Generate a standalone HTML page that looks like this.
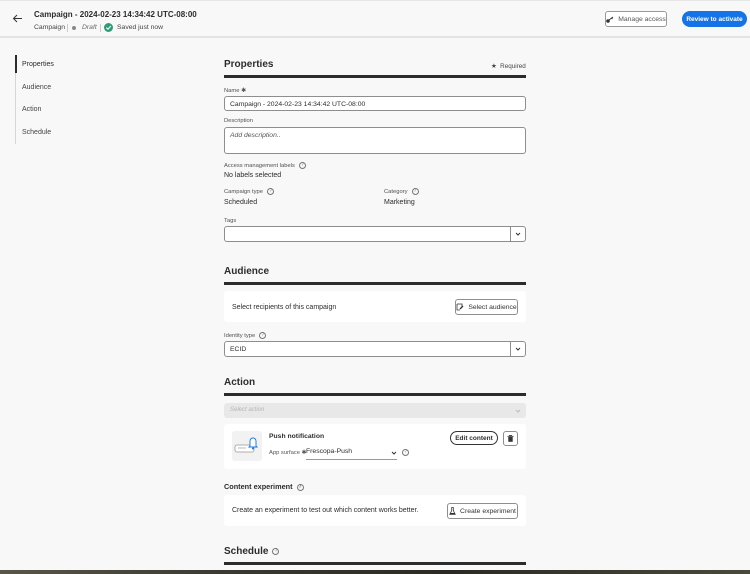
<!DOCTYPE html>
<html><head><meta charset="utf-8"><style>
*{box-sizing:border-box;margin:0;padding:0}
body{width:750px;height:574px;overflow:hidden;background:#f8f8f8;font-family:"Liberation Sans",sans-serif;color:#2c2c2c;position:relative;font-size:7px}
.a{position:absolute;white-space:nowrap}
.hdr{position:absolute;left:0;top:0;width:750px;height:38px;background:#f8f8f8;border-top:1px solid #e6e6e6;border-bottom:2px solid #e3e3e3}
.h2{font-weight:bold;font-size:10px;color:#2c2c2c}
.rule{position:absolute;left:224px;width:302px;height:3px;background:#2c2c2c}
.lbl{font-size:5.8px;color:#505050}
.inp{position:absolute;left:224px;width:302px;background:#fff;border:1px solid #8e8e8e;border-radius:3px}
.card{position:absolute;left:224px;width:302px;background:#fff;border-radius:3px}
.btn{position:absolute;border:1px solid #8e8e8e;border-radius:3px;background:#fff;font-size:6.8px;display:flex;align-items:center;justify-content:center;gap:4px;color:#333}
.q{display:inline-block;width:7px;height:7px;border:0.8px solid #777;border-radius:50%;font-size:5px;line-height:5.5px;text-align:center;vertical-align:middle;margin-left:4px;color:#777}
.dd{position:absolute;right:0;top:0;bottom:0;width:15px;border-left:1px solid #8e8e8e;display:flex;align-items:center;justify-content:center}
</style></head><body>
<div class="hdr"></div>
<svg class="a" style="left:12px;top:14px" width="11" height="9" viewBox="0 0 11 9"><path d="M5 1L1.5 4.5L5 8M1.5 4.5H10" stroke="#333" stroke-width="1" fill="none"/></svg>
<div class="a" style="left:34px;top:10px;font-size:8px;font-weight:bold">Campaign - 2024-02-23 14:34:42 UTC-08:00</div>
<div class="a" style="left:34px;top:24px;font-size:6.8px;color:#444">Campaign</div>
<div class="a" style="left:67px;top:24px;width:1px;height:8px;background:#ccc"></div>
<div class="a" style="left:72px;top:26px;width:4px;height:4px;border-radius:50%;background:#888"></div>
<div class="a" style="left:82px;top:24px;font-size:6.8px;font-style:italic;color:#666">Draft</div>
<div class="a" style="left:100px;top:24px;width:1px;height:8px;background:#ccc"></div>
<svg class="a" style="left:104px;top:23px" width="9" height="9" viewBox="0 0 9 9"><circle cx="4.5" cy="4.5" r="4.5" fill="#2d9d78"/><path d="M2.3 4.6L4 6.2L6.8 3" stroke="#fff" stroke-width="1.1" fill="none"/></svg>
<div class="a" style="left:117px;top:24px;font-size:6.8px;color:#444">Saved just now</div>
<div class="btn" style="left:605px;top:11px;width:62px;height:16px;border-color:#999;color:#555"><svg width="8" height="7" viewBox="0 0 8 7"><circle cx="2" cy="5" r="1.8" fill="#333"/><path d="M3 4L7 1M5.5 2L6.5 3" stroke="#333" stroke-width="1"/></svg>Manage access</div>
<div class="a" style="left:682px;top:11px;width:65px;height:16px;border-radius:8px;background:#1473e6;color:#fff;font-weight:bold;font-size:6.5px;display:flex;align-items:center;justify-content:center">Review to activate</div>

<div class="a" style="left:15px;top:55px;width:1px;height:89px;background:#d5d5d5"></div>
<div class="a" style="left:15px;top:55px;width:2px;height:18px;background:#2c2c2c"></div>
<div class="a" style="left:22px;top:61px">Properties</div>
<div class="a" style="left:22px;top:84px;color:#444">Audience</div>
<div class="a" style="left:22px;top:106px;color:#444">Action</div>
<div class="a" style="left:22px;top:129px;color:#444">Schedule</div>

<div class="a h2" style="left:224px;top:59px">Properties</div>
<div class="a" style="left:491px;top:63px;font-size:6.3px;color:#444">★&nbsp; Required</div>
<div class="rule" style="top:75px"></div>
<div class="a lbl" style="left:224px;top:88px">Name ✱</div>
<div class="inp" style="top:96px;height:15px"><div class="a" style="left:5px;top:3.5px;font-size:6.8px">Campaign - 2024-02-23 14:34:42 UTC-08:00</div></div>
<div class="a lbl" style="left:224px;top:118px">Description</div>
<div class="inp" style="top:127px;height:27px"><div class="a" style="left:5px;top:3.5px;font-size:6.8px;font-style:italic;color:#555">Add description..</div></div>
<div class="a lbl" style="left:224px;top:162px">Access management labels<span class="q">?</span></div>
<div class="a" style="left:224px;top:172px">No labels selected</div>
<div class="a lbl" style="left:224px;top:188px">Campaign type<span class="q">?</span></div>
<div class="a lbl" style="left:384px;top:188px">Category<span class="q">?</span></div>
<div class="a" style="left:224px;top:199px">Scheduled</div>
<div class="a" style="left:384px;top:199px">Marketing</div>
<div class="a lbl" style="left:224px;top:218px">Tags</div>
<div class="inp" style="top:226px;height:16px"><div class="dd"><svg width="6" height="4"><path d="M1 1L3 3L5 1" stroke="#333" fill="none"/></svg></div></div>

<div class="a h2" style="left:224px;top:266px">Audience</div>
<div class="rule" style="top:282px"></div>
<div class="card" style="top:291px;height:31px"></div>
<div class="a" style="left:232px;top:304px">Select recipients of this campaign</div>
<div class="btn" style="left:455px;top:299px;width:63px;height:16px"><svg width="8" height="8" viewBox="0 0 8 8"><path d="M1 1H6V4M1 1V7H4" stroke="#333" fill="none" stroke-width=".8"/><path d="M4 6L7 3" stroke="#333" stroke-width="1.3"/></svg>Select audience</div>
<div class="a lbl" style="left:224px;top:332px">Identity type<span class="q">?</span></div>
<div class="inp" style="top:341px;height:16px"><div class="a" style="left:5px;top:4px;font-size:6.8px">ECID</div><div class="dd"><svg width="6" height="4"><path d="M1 1L3 3L5 1" stroke="#333" fill="none"/></svg></div></div>

<div class="a h2" style="left:224px;top:377px">Action</div>
<div class="rule" style="top:393px"></div>
<div class="a" style="left:224px;top:403px;width:302px;height:15px;background:#e8e8e8;border-radius:3px"><div class="a" style="left:6px;top:4px;font-size:6px;color:#b5b5b5;font-style:italic">Select action</div><svg class="a" style="right:5px;top:6px" width="6" height="4"><path d="M1 1L3 3L5 1" stroke="#bbb" fill="none"/></svg></div>
<div class="card" style="top:424px;height:45px"></div>
<div class="a" style="left:232px;top:431px;width:30px;height:30px;background:#f2f2f2;border-radius:3px"><svg class="a" style="left:2px;top:4px" width="26" height="22" viewBox="0 0 26 22"><rect x="1" y="10" width="19" height="7" rx="2" fill="#fff" stroke="#999" stroke-width=".8"/><path d="M4 13H12" stroke="#bbb"/><path d="M16 11V6A3 3 0 0 1 22 6V11L23 12H15Z" fill="#fff" stroke="#1473e6" stroke-width=".9"/><circle cx="19" cy="13.5" r="1" fill="#1473e6"/></svg></div>
<div class="a" style="left:269px;top:433px;font-weight:bold;font-size:6.8px">Push notification</div>
<div class="a" style="left:269px;top:450px;font-size:5.8px;color:#555">App surface ✱</div>
<div class="a" style="left:306px;top:448px;font-size:6.8px">Frescopa-Push</div>
<div class="a" style="left:306px;top:459px;width:91px;height:1px;background:#999"></div>
<svg class="a" style="left:391px;top:451px" width="6" height="4"><path d="M1 1L3 3L5 1" stroke="#333" fill="none"/></svg>
<div class="a" style="left:402px;top:449px"><span class="q" style="margin:0">?</span></div>
<div class="a" style="left:450px;top:431px;width:48px;height:14px;border:1.2px solid #333;border-radius:8px;background:#fff;font-weight:bold;font-size:6.5px;display:flex;align-items:center;justify-content:center">Edit content</div>
<div class="btn" style="left:503px;top:431px;width:15px;height:15px"><svg width="7" height="7" viewBox="0 0 7 7"><path d="M0.5 1.3H6.5M2.5 1.2V0.4H4.5V1.2" stroke="#333" stroke-width=".8" fill="none"/><rect x="1.3" y="2" width="4.4" height="4.8" fill="#333"/></svg></div>

<div class="a" style="left:224px;top:482px;font-weight:bold;font-size:7.3px">Content experiment<span class="q">?</span></div>
<div class="card" style="top:495px;height:31px"></div>
<div class="a" style="left:232px;top:507px">Create an experiment to test out which content works better.</div>
<div class="btn" style="left:447px;top:503px;width:71px;height:16px"><svg width="7" height="8" viewBox="0 0 7 8"><path d="M2.3 0.5H4.7M2.7 0.5V3.5L0.8 7.3H6.2L4.3 3.5V0.5" stroke="#333" stroke-width=".8" fill="none"/><path d="M1.3 6H5.7L6.2 7.3H0.8Z" fill="#333"/></svg>Create experiment</div>

<div class="a h2" style="left:224px;top:546px">Schedule<span class="q" style="font-weight:normal">?</span></div>
<div class="rule" style="top:562px"></div>
<div class="a" style="left:0;top:570px;width:750px;height:4px;background:linear-gradient(90deg,#5a5546,#3a3a30 30%,#2a2a22 60%,#4a4a3a)"></div>
</body></html>
